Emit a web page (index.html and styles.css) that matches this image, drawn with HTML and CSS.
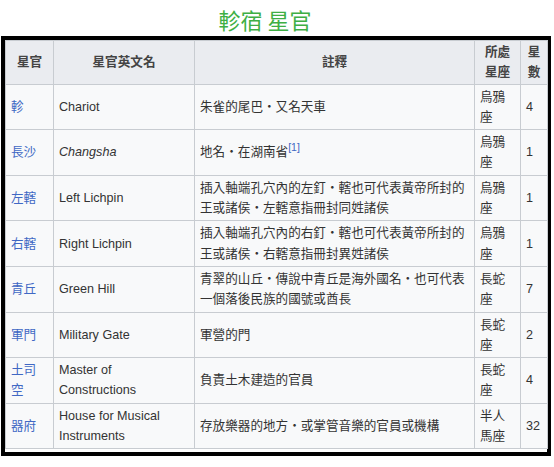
FILE: index.html
```html
<!DOCTYPE html>
<html lang="zh-Hant">
<head>
<meta charset="utf-8">
<title>軫宿 星官</title>
<link rel="stylesheet" href="styles.css">
</head>
<body>
<h1 class="title">軫宿 星官</h1>
<div class="frame">
<table class="wikitable">
<colgroup>
<col class="c1"><col class="c2"><col class="c3"><col class="c4"><col class="c5">
</colgroup>
<thead>
<tr><th>星官</th><th>星官英文名</th><th>註釋</th><th>所處星座</th><th>星數</th></tr>
</thead>
<tbody>
<tr><td class="name"><a>軫</a></td><td class="en">Chariot</td><td>朱雀的尾巴・又名天車</td><td>烏鴉座</td><td>4</td></tr>
<tr><td class="name"><a>長沙</a></td><td class="en"><i>Changsha</i></td><td>地名・在湖南省<sup class="ref">[1]</sup></td><td>烏鴉座</td><td>1</td></tr>
<tr><td class="name"><a>左轄</a></td><td class="en">Left Lichpin</td><td>插入軸端孔穴內的左釘・轄也可代表黃帝所封的王或諸侯・左轄意指冊封同姓諸侯</td><td>烏鴉座</td><td>1</td></tr>
<tr><td class="name"><a>右轄</a></td><td class="en">Right Lichpin</td><td>插入軸端孔穴內的右釘・轄也可代表黃帝所封的王或諸侯・右轄意指冊封異姓諸侯</td><td>烏鴉座</td><td>1</td></tr>
<tr><td class="name"><a>青丘</a></td><td class="en">Green Hill</td><td>青翠的山丘・傳說中青丘是海外國名・也可代表一個落後民族的國號或酋長</td><td>長蛇座</td><td>7</td></tr>
<tr><td class="name"><a>軍門</a></td><td class="en">Military Gate</td><td>軍營的門</td><td>長蛇座</td><td>2</td></tr>
<tr><td class="name"><a>土司空</a></td><td class="en">Master of Constructions</td><td>負責土木建造的官員</td><td>長蛇座</td><td>4</td></tr>
<tr><td class="name"><a>器府</a></td><td class="en">House for Musical Instruments</td><td>存放樂器的地方・或掌管音樂的官員或機構</td><td>半人馬座</td><td>32</td></tr>
</tbody>
</table>
</div>
</body>
</html>
```
FILE: styles.css
```css
html, body {
  margin: 0;
  padding: 0;
  background: #ffffff;
}

body {
  width: 554px;
  font-family: "Liberation Sans", "Noto Sans CJK TC", sans-serif;
}

.title {
  margin: 0;
  padding-right: 24px;
  height: 36px;
  line-height: 38px;
  text-align: center;
  font-family: "Noto Sans CJK TC", sans-serif;
  font-weight: 400;
  font-size: 22px;
  color: #3eaf44;
}

.frame {
  margin-left: 1px;
  width: 542px;
  border: 4px solid #000;
  padding: 0 0 3px 0;
  background: #fff;
}

.wikitable {
  width: 542px;
  table-layout: fixed;
  border-collapse: collapse;
  background: #f8f9fa;
  color: #333;
  font-size: 12.6px;
  line-height: 20.3px;
}

.c1 { width: 48px; }
.c2 { width: 141px; }
.c3 { width: 280px; }
.c4 { width: 46px; }
.c5 { width: 27px; }

.wikitable th,
.wikitable td {
  border: 1px solid #c8ccd1;
  padding: 2px 5px;
  vertical-align: middle;
}

.wikitable th {
  background: #eaecf0;
  font-weight: 700;
  text-align: center;
  padding: 1px 5px;
  color: #444;
}

.wikitable td.name {
  padding-right: 6px;
}

.wikitable td.en {
  padding-right: 10px;
}

.wikitable a {
  color: #4068c4;
}

.ref {
  font-size: 10.5px;
  line-height: 0;
  color: #4068c4;
}
```
